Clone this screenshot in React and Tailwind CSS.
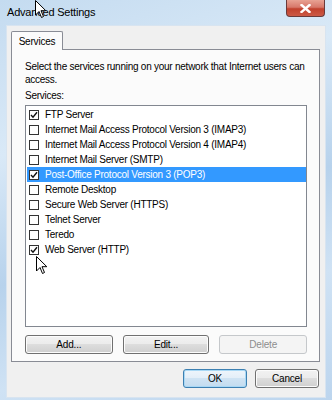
import React from "react";

const items = [
  { label: "FTP Server", checked: true },
  { label: "Internet Mail Access Protocol Version 3 (IMAP3)" },
  { label: "Internet Mail Access Protocol Version 4 (IMAP4)" },
  { label: "Internet Mail Server (SMTP)" },
  { label: "Post-Office Protocol Version 3 (POP3)", checked: true, selected: true },
  { label: "Remote Desktop" },
  { label: "Secure Web Server (HTTPS)" },
  { label: "Telnet Server" },
  { label: "Teredo" },
  { label: "Web Server (HTTP)", checked: true },
];

function Check({ checked }) {
  return (
    <div className="w-[10px] h-[10px] border border-[#333] bg-white flex items-center justify-center shrink-0">
      {checked && (
        <svg width="8" height="8" viewBox="0 0 8 8">
          <path d="M1 4 L3 6.2 L7 1.2" stroke="#111" strokeWidth="1.4" fill="none" />
        </svg>
      )}
    </div>
  );
}

function Btn({ children, w, disabled, primary }) {
  return (
    <div
      className={
        "h-[19px] rounded-[3px] border flex items-center justify-center text-[10px] tracking-[-0.2px] " +
        (disabled
          ? "border-[#c5c8cb] text-[#8d8d8d] bg-[#f4f4f4]"
          : primary
          ? "border-[#3c7fb1] text-black bg-[linear-gradient(#eef5fb_0%,#e3eef8_50%,#cfe3f3_50%,#c3dcf0_100%)] shadow-[inset_0_0_0_1px_#a8d8f5]"
          : "border-[#707070] text-black bg-[linear-gradient(#f2f2f2_0%,#ebebeb_50%,#dddddd_50%,#cfcfcf_100%)] shadow-[inset_0_0_0_1px_#fcfcfc]")
      }
      style={{ width: w }}
    >
      {children}
    </div>
  );
}

function Cursor({ className }) {
  return (
    <svg className={className} width="12" height="19" viewBox="0 0 12 19">
      <path d="M0.5 0.5 L0.5 15 L4 11.5 L6.5 17.5 L8.5 16.5 L6 10.7 L10.8 10.7 Z" fill="#fff" stroke="#000" strokeWidth="1" />
    </svg>
  );
}

export default function App() {
  return (
    <div
      className="relative w-[332px] h-[400px] overflow-hidden bg-[linear-gradient(160deg,#c4dbf0_0%,#d9e9f7_30%,#b7d2ec_55%,#cfe2f4_75%,#bcd5ee_100%)]"
      style={{ fontFamily: '"Liberation Sans", Arial, sans-serif' }}
    >
      {/* title bar */}
      <div className="h-[25px] flex items-start justify-between">
        <div className="pl-[7px] pt-[5px] text-[11px] tracking-[-0.2px] text-black leading-[14px]">Advanced Settings</div>
        <div className="mr-[7px] w-[39px] h-[17px] rounded-b-[4px] border border-[#6a3a3a] border-t-0 bg-[linear-gradient(#e8a293_0%,#d7786a_45%,#c1412d_55%,#cc5a46_100%)] flex items-center justify-center">
          <svg width="11" height="9" viewBox="0 0 11 9">
            <path d="M1.5 1 L9.5 8 M9.5 1 L1.5 8" stroke="#fff" strokeWidth="2.4" strokeLinecap="square" />
          </svg>
        </div>
      </div>
      {/* client */}
      <div className="mx-[6px] h-[373px] bg-[#f0f0f0] border border-[#d8e4f0] pl-[4px] pr-[5px] pt-[5px] flex flex-col">
        {/* tab header */}
        <div className="flex h-[19px]">
          <div className="w-[52px] h-[19px] border border-[#898c95] border-b-0 bg-[#fbfbfb] text-[10px] tracking-[-0.2px] flex items-center justify-center relative z-10 rounded-t-[2px]">
            Services
          </div>
        </div>
        {/* panel */}
        <div className="-mt-px border border-[#898c95] bg-[#fbfbfb] pl-[13px] pr-[12px] pt-[10px] pb-[7px] flex flex-col text-[10px] tracking-[-0.25px]">
          <div className="leading-[13px] text-black">
            Select the services running on your network that Internet users can access.
          </div>
          <div className="mt-[3px] leading-[13px] text-black">Services:</div>
          <div className="mt-[3px] h-[222px] border border-[#828790] bg-white pt-px pl-px">
            {items.map((it) => (
              <div
                key={it.label}
                className={
                  "h-[15px] flex items-center pl-[2px] gap-[6px] " +
                  (it.selected ? "bg-[#3399ff] text-white" : "text-black")
                }
              >
                <Check checked={it.checked} />
                <span>{it.label}</span>
              </div>
            ))}
          </div>
          <div className="mt-[8px] flex gap-[10px]">
            <Btn w={88}>Add...</Btn>
            <Btn w={87}>Edit...</Btn>
            <Btn w={88} disabled>Delete</Btn>
          </div>
        </div>
        <div className="mt-[7px] flex justify-end gap-[8px] pr-[1px]">
          <Btn w={64} primary>OK</Btn>
          <Btn w={64}>Cancel</Btn>
        </div>
      </div>
      <Cursor className="absolute left-[35px] top-0" />
      <Cursor className="absolute left-[36px] top-[256px]" />
    </div>
  );
}
